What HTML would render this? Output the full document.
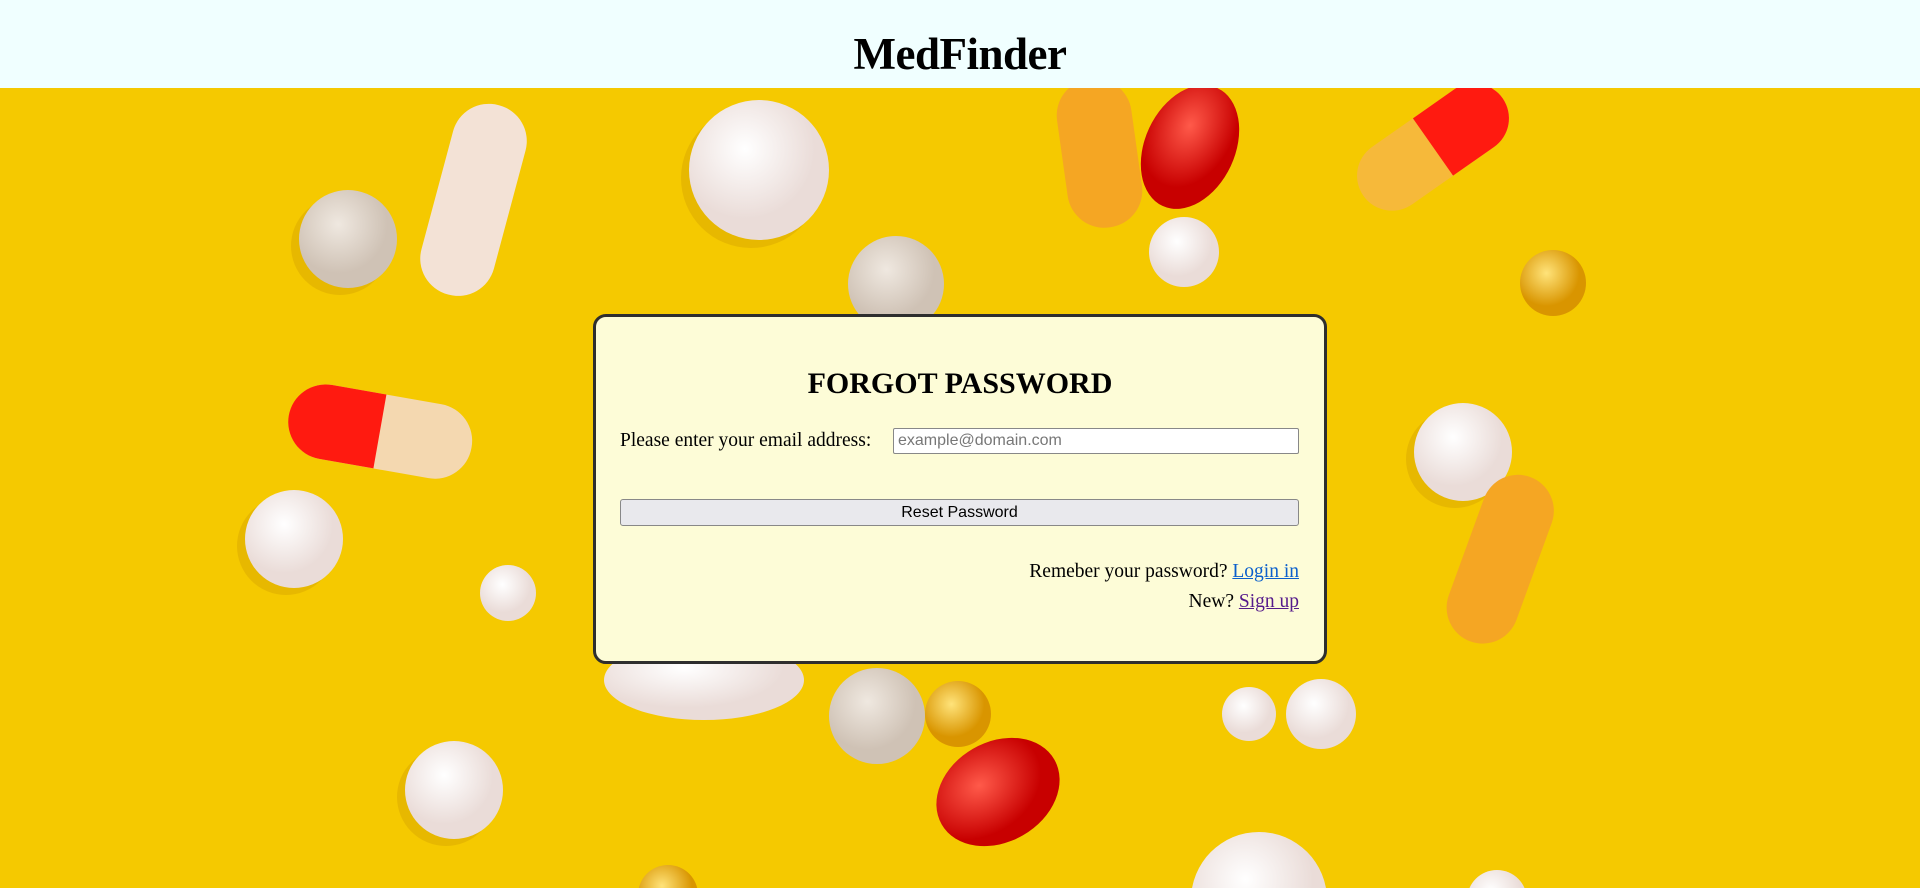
<!DOCTYPE html>
<html><head><meta charset="utf-8"><style>
html,body{margin:0;padding:0;width:1920px;height:888px;overflow:hidden;background:#f5c900;font-family:"Liberation Serif",serif;position:relative}
header{position:absolute;left:0;top:0;width:1920px;height:88px;background:#f0ffff;text-align:center}
header h1{margin:0;font:bold 45px/1 "Liberation Serif",serif;position:absolute;top:32px;left:0;right:0;letter-spacing:-0.5px}
svg.bg{position:absolute;left:0;top:88px;display:block}
.card{position:absolute;left:593px;top:314px;width:728px;height:344px;background:#fdfcd7;border:3px solid #2e2e2e;border-radius:13px}
.card h2{position:absolute;left:0;right:0;top:52px;margin:0;text-align:center;font:bold 30px/1 "Liberation Serif",serif}
.lbl{position:absolute;left:24px;top:113px;font-size:19.5px}
.inp{position:absolute;left:297px;top:111px;border:1px solid #888;background:#fff;border-radius:2px;font:16px "Liberation Sans",sans-serif;color:#777;line-height:24px;padding-left:4px;box-sizing:border-box;width:406px;height:26px}
.btn{position:absolute;left:24px;top:182px;width:679px;height:27px;box-sizing:border-box;border:1px solid #888;border-radius:3px;background:#e9e9ed;text-align:center;font:16px/25px "Liberation Sans",sans-serif;color:#000}
.l1,.l2{position:absolute;right:25px;font-size:19.5px}
.l1{top:244px}.l2{top:274px}
a{text-decoration:underline}.a1{color:#0b5fcc}.a2{color:#551a8b}
</style></head><body>
<header><h1>MedFinder</h1></header>
<svg class="bg" width="1920" height="800" viewBox="0 88 1920 800">
<defs>
<radialGradient id="w" cx="40%" cy="35%"><stop offset="0" stop-color="#fff"/><stop offset="1" stop-color="#eadcd8"/></radialGradient>
<radialGradient id="s" cx="40%" cy="35%"><stop offset="0" stop-color="#efe8e0"/><stop offset="1" stop-color="#cfc2b5"/></radialGradient>
<radialGradient id="g" cx="40%" cy="35%"><stop offset="0" stop-color="#ffe37a"/><stop offset="1" stop-color="#d99500"/></radialGradient>
<radialGradient id="r" cx="40%" cy="35%"><stop offset="0" stop-color="#ff5a4a"/><stop offset="1" stop-color="#c80000"/></radialGradient>
</defs>
<g fill="#d9a800" opacity=".5">
<circle cx="340" cy="246" r="49"/><circle cx="751" cy="178" r="70"/><circle cx="286" cy="546" r="49"/><circle cx="446" cy="797" r="49"/><circle cx="1455" cy="459" r="49"/>
</g>
<circle cx="348" cy="239" r="49" fill="url(#s)"/>
<rect x="436" y="102" width="75" height="196" rx="37" fill="#f3e2d6" transform="rotate(15 474 200)"/>
<circle cx="759" cy="170" r="70" fill="url(#w)"/>
<rect x="1062" y="78" width="75" height="150" rx="37" fill="#f5a623" transform="rotate(-8 1100 153)"/>
<ellipse cx="1190" cy="147" rx="45" ry="65" fill="url(#r)" transform="rotate(25 1190 147)"/>
<circle cx="1184" cy="252" r="35" fill="url(#w)"/>
<g transform="rotate(-35 1433 147)"><rect x="1348" y="112" width="170" height="70" rx="35" fill="#f6b93a"/><path d="M1433 112h50a35 35 0 0 1 0 70h-50z" fill="#ff1a10"/></g>
<circle cx="1553" cy="283" r="33" fill="url(#g)"/>
<circle cx="896" cy="284" r="48" fill="url(#s)"/>
<g transform="rotate(10 380 431)"><rect x="288" y="394" width="185" height="75" rx="37" fill="#f4d8b0"/><path d="M380 394h-55a37 37 0 0 0 0 75h55z" fill="#ff1a10"/></g>
<circle cx="294" cy="539" r="49" fill="url(#w)"/>
<circle cx="508" cy="593" r="28" fill="url(#w)"/>
<circle cx="1463" cy="452" r="49" fill="url(#w)"/>
<rect x="1414" y="523" width="175" height="72" rx="36" fill="#f5a623" transform="rotate(-70 1501 560)"/>
<ellipse cx="704" cy="680" rx="100" ry="40" fill="url(#w)"/>
<circle cx="877" cy="716" r="48" fill="url(#s)"/>
<circle cx="958" cy="714" r="33" fill="url(#g)"/>
<ellipse cx="998" cy="792" rx="65" ry="50" fill="url(#r)" transform="rotate(-30 998 792)"/>
<circle cx="454" cy="790" r="49" fill="url(#w)"/>
<circle cx="1249" cy="714" r="27" fill="url(#w)"/>
<circle cx="1321" cy="714" r="35" fill="url(#w)"/>
<circle cx="1259" cy="900" r="68" fill="url(#w)"/>
<circle cx="1497" cy="900" r="30" fill="url(#w)"/>
<circle cx="668" cy="895" r="30" fill="url(#g)"/>
</svg>
<div class="card">
<h2>FORGOT PASSWORD</h2>
<div class="lbl">Please enter your email address:</div>
<div class="inp">example@domain.com</div>
<div class="btn">Reset Password</div>
<div class="l1">Remeber your password? <a class="a1">Login in</a></div>
<div class="l2">New? <a class="a2">Sign up</a></div>
</div>
</body></html>
